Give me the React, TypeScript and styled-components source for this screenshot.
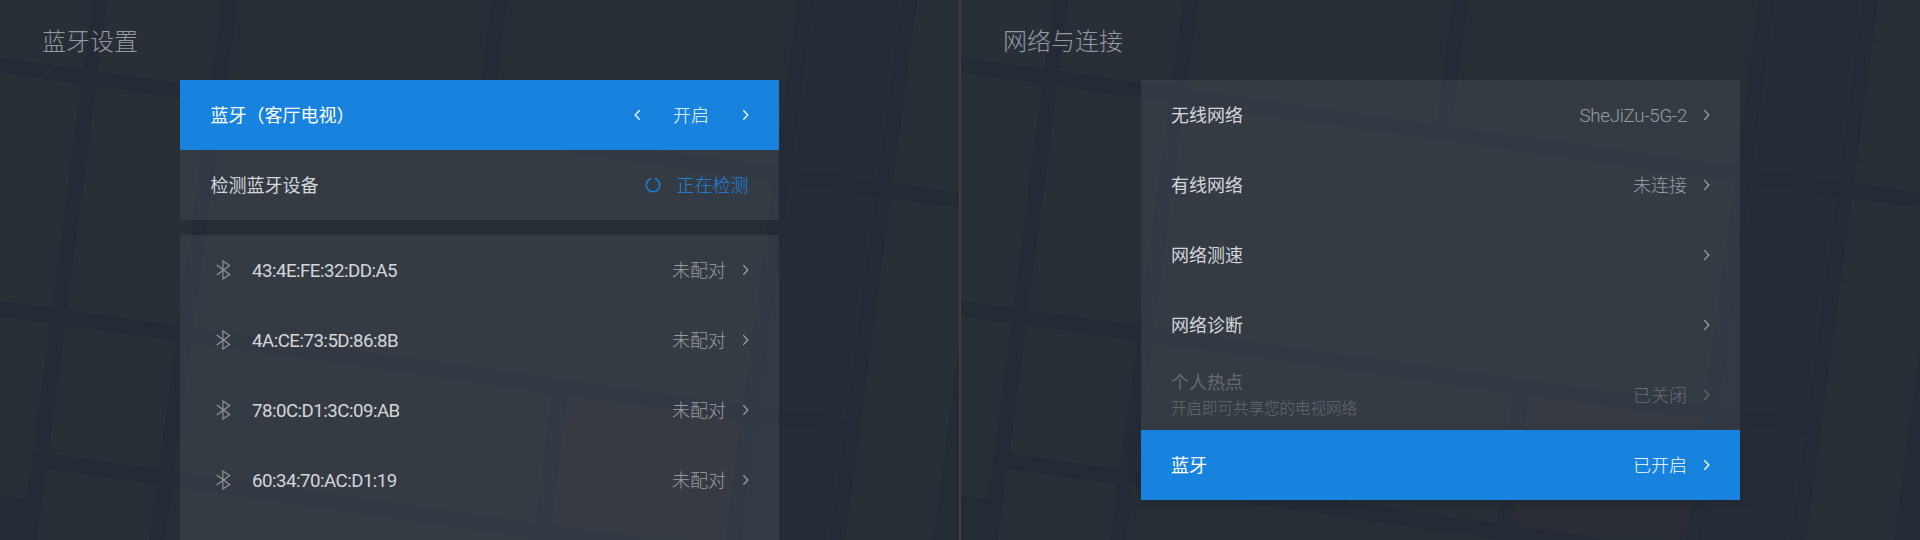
import React from "react";
import styled, { createGlobalStyle, css } from "styled-components";

const GlobalStyle = createGlobalStyle`
  * { box-sizing: border-box; }
  html, body { margin: 0; padding: 0; background: #262d36; overflow: hidden; }
  body { font-family: Roboto, "Noto Sans CJK SC", sans-serif; }
`;

const Page = styled.main`
  display: grid;
  grid-template-columns: 959px 2px 959px;
  width: 1920px;
  height: 540px;
  overflow: hidden;
`;

const Divider = styled.div`
  background: #403f40;
`;

const Screen = styled.section`
  position: relative;
  display: flex;
  flex-direction: column;
  height: 540px;
  overflow: hidden;
`;

const Backdrop = styled.svg`
  position: absolute;
  inset: 0;
  z-index: 0;
`;

const Title = styled.h1`
  position: relative;
  flex: none;
  margin: 0;
  height: 80px;
  padding: 24px 0 0 42px;
  font-size: 24px;
  line-height: 36px;
  font-weight: 300;
  color: #949aa1;
`;

const Content = styled.div<{ $wide?: boolean }>`
  position: relative;
  display: flex;
  flex-direction: column;
  gap: 15px;
  width: ${(p) => (p.$wide ? 599.5 : 599)}px;
  margin-left: ${(p) => (p.$wide ? 179.5 : 180)}px;
`;

const Panel = styled.div`
  flex: none;
  background: rgba(66, 72, 79, 0.5);
`;

const Row = styled.div<{ $active?: boolean; $raised?: boolean; $disabled?: boolean }>`
  display: flex;
  align-items: center;
  height: 70px;
  padding: 0 30.5px;
  color: #d3d6da;
  ${(p) =>
    p.$active &&
    css`
      background: #1883df;
      color: #fff;
    `}
  ${(p) => p.$raised && css`box-shadow: 0 3px 8px rgba(24, 28, 30, 0.35);`}
  ${(p) => p.$disabled && css`color: #666b72;`}
`;

const BtSlot = styled.span`
  display: flex;
  width: 41.5px;
  padding-left: 5.5px;
`;

const Label = styled.span`
  flex: 1;
  padding-top: 2px;
  font-size: 18px;
  line-height: 26px;
  font-weight: 400;
`;

const Address = styled(Label)`
  padding-top: 1px;
  font-size: 18.7px;
  letter-spacing: -0.52px;
`;

const Stack = styled.span`
  flex: 1;
  display: flex;
  flex-direction: column;
  padding-top: 2px;
`;

const StackLabel = styled.span`
  font-size: 18px;
  line-height: 26px;
`;

const Hint = styled.span`
  font-size: 15.5px;
  line-height: 26px;
  font-weight: 300;
  color: #666b72;
`;

const Value = styled.span<{ $tone?: "white" | "blue" | "dim" }>`
  padding-top: 2px;
  font-size: 18px;
  line-height: 26px;
  font-weight: 300;
  color: ${(p) =>
    p.$tone === "white" ? "#f4faff" : p.$tone === "blue" ? "#1b86e2" : p.$tone === "dim" ? "#686d74" : "#989da4"};
`;

const NetworkName = styled(Value)`
  font-size: 18.7px;
  letter-spacing: -0.3px;
`;

const Stepper = styled.span`
  display: flex;
  align-items: center;
  justify-content: space-between;
  width: 115px;
`;

const ChevronSlot = styled.span`
  display: flex;
  margin-left: 15.5px;
`;

const Busy = styled.span`
  display: flex;
  align-items: center;
  gap: 16px;
`;

const Chevron = ({ left, color = "#a3a7ac", w = 1.2 }: { left?: boolean; color?: string; w?: number }) => (
  <svg width="7" height="12" viewBox="0 0 7 12" fill="none" stroke={color} strokeWidth={w}>
    <path d={left ? "M5.7 1.200 1.200 6l4.500 4.800" : "M1.300 1.200 5.800 6l-4.500 4.800"} />
  </svg>
);

const Bluetooth = () => (
  <svg width="16" height="20" viewBox="0 0 16 20" fill="none" stroke="#96999c" strokeWidth="1.1">
    <path d="M.7 5 13.700 14.500 6.900 19V1L13.700 5.500 .7 15" />
  </svg>
);

const Spinner = () => (
  <svg width="16" height="16" viewBox="0 0 16 16" fill="none" stroke="#1b84de" strokeWidth="1.5">
    <path d="M9.700 1.500A6.700 6.700 0 1 1 6.300 1.500" />
  </svg>
);

const Tiles = () => (
  <Backdrop width="959" height="540" viewBox="0 0 959 540">
    <rect width="959" height="540" fill="#272e36" />
    <path d="M0 0H230L195 270 156 540H0Z" fill="#282f36" />
    <path d="M805 0H910L837 540H732Z" fill="#262d36" />
    <path d="M910 0H959V540H837Z" fill="#282f37" />
    <path d="M560 387 749 414 732 540 540 530Z" fill="#2a2d35" />
    <g stroke="#242b34" strokeWidth="15" fill="none">
      <path d="M-5 64.500 965 201" />
      <path d="M-5 308 850 427" />
      <path d="M32 459 640 546" />
      <path d="M100-2 29 545" />
      <path d="M230-2 156 545" />
      <path d="M499.500-2 483 125" />
      <path d="M806-2 732 545" />
      <path d="M910-2 837 545" />
      <path d="M560 390 543 530" />
    </g>
    <path d="M0 496 26 499 34 455 42 470 34 540H0Z" fill="#242b34" />
    <path d="M959 346V540H933Z" fill="#242b34" />
  </Backdrop>
);

const devices = ["43:4E:FE:32:DD:A5", "4A:CE:73:5D:86:8B", "78:0C:D1:3C:09:AB", "60:34:70:AC:D1:19"];

const BluetoothSettings = () => (
  <Screen>
    <Tiles />
    <Title>蓝牙设置</Title>
    <Content>
      <Panel>
        <Row $active>
          <Label>蓝牙（客厅电视）</Label>
          <Stepper>
            <Chevron left color="#e6f2fc" w={1.5} />
            <Value $tone="white">开启</Value>
            <Chevron color="#e6f2fc" w={1.5} />
          </Stepper>
        </Row>
        <Row>
          <Label>检测蓝牙设备</Label>
          <Busy>
            <Spinner />
            <Value $tone="blue">正在检测</Value>
          </Busy>
        </Row>
      </Panel>
      <Panel>
        {devices.map((d) => (
          <Row key={d}>
            <BtSlot>
              <Bluetooth />
            </BtSlot>
            <Address>{d}</Address>
            <Value>未配对</Value>
            <ChevronSlot>
              <Chevron />
            </ChevronSlot>
          </Row>
        ))}
        <Row />
      </Panel>
    </Content>
  </Screen>
);

const NetworkSettings = () => (
  <Screen>
    <Tiles />
    <Title>网络与连接</Title>
    <Content $wide>
      <Panel>
        <Row>
          <Label>无线网络</Label>
          <NetworkName>SheJiZu-5G-2</NetworkName>
          <ChevronSlot><Chevron /></ChevronSlot>
        </Row>
        <Row>
          <Label>有线网络</Label>
          <Value>未连接</Value>
          <ChevronSlot><Chevron /></ChevronSlot>
        </Row>
        <Row>
          <Label>网络测速</Label>
          <ChevronSlot><Chevron /></ChevronSlot>
        </Row>
        <Row>
          <Label>网络诊断</Label>
          <ChevronSlot><Chevron /></ChevronSlot>
        </Row>
        <Row $disabled>
          <Stack>
            <StackLabel>个人热点</StackLabel>
            <Hint>开启即可共享您的电视网络</Hint>
          </Stack>
          <Value $tone="dim">已关闭</Value>
          <ChevronSlot><Chevron color="#6a6d72" /></ChevronSlot>
        </Row>
        <Row $active $raised>
          <Label>蓝牙</Label>
          <Value $tone="white">已开启</Value>
          <ChevronSlot><Chevron color="#e6f2fc" w={1.5} /></ChevronSlot>
        </Row>
      </Panel>
    </Content>
  </Screen>
);

export default function App() {
  return (
    <>
      <GlobalStyle />
      <Page>
        <BluetoothSettings />
        <Divider />
        <NetworkSettings />
      </Page>
    </>
  );
}
